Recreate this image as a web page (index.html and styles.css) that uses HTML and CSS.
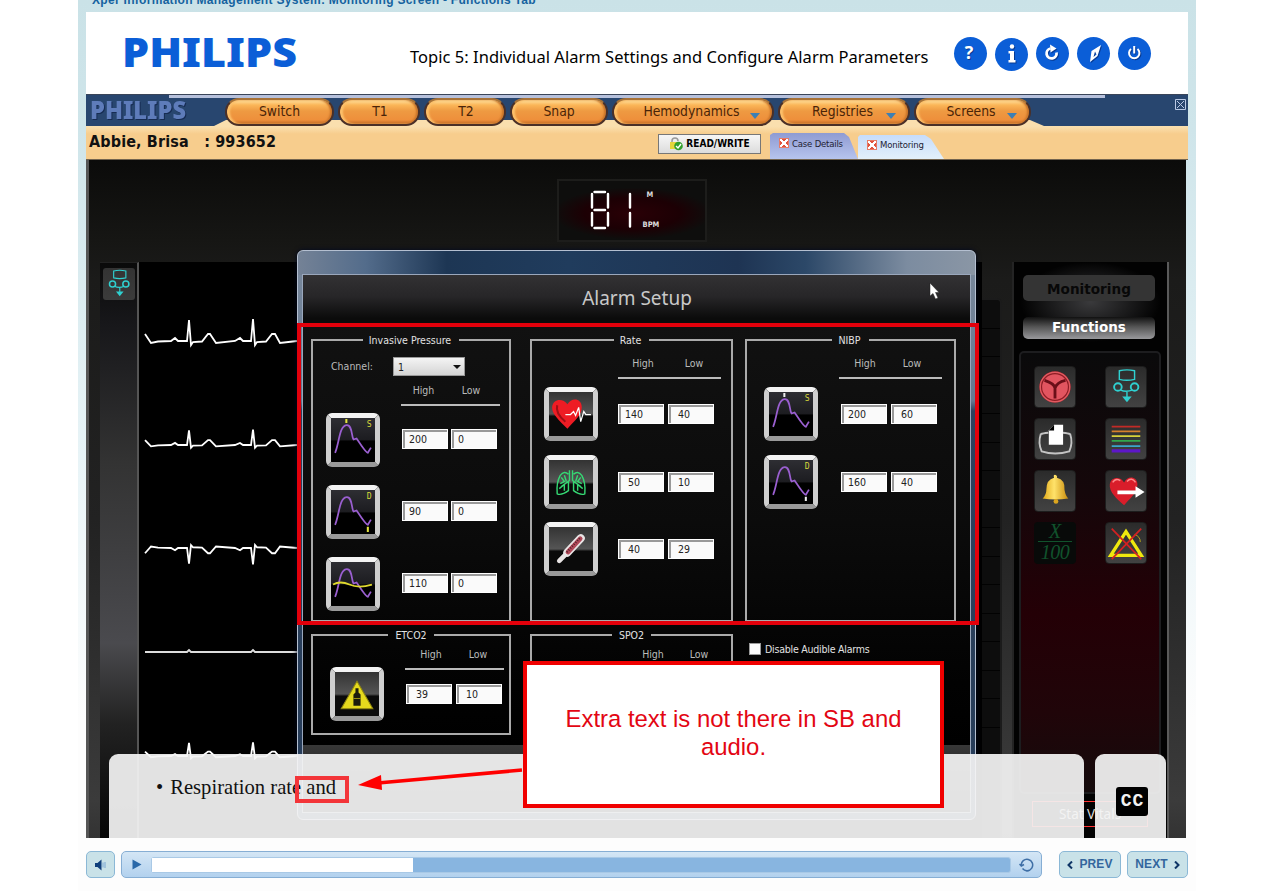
FILE: index.html
```html
<!DOCTYPE html>
<html lang="en">
<head>
<meta charset="utf-8">
<title>Xper Information Management System</title>
<link rel="stylesheet" href="styles.css">
</head>
<body>
<svg class="defs" aria-hidden="true">
  <defs>
    <linearGradient id="gloss" x1="0" y1="0" x2="0" y2="1"><stop offset="0" stop-color="#2e2e33"/><stop offset=".5" stop-color="#1c1c20"/><stop offset=".52" stop-color="#000"/></linearGradient>
    <linearGradient id="gray" x1="0" y1="0" x2="0" y2="1"><stop offset="0" stop-color="#333"/><stop offset=".5" stop-color="#555"/><stop offset=".55" stop-color="#0a0a0a"/></linearGradient>
    <linearGradient id="gold" x1="0" x2="1"><stop offset="0" stop-color="#e0a818"/><stop offset=".45" stop-color="#ffe26a"/><stop offset="1" stop-color="#c98c0c"/></linearGradient>
    <path id="pulse" d="M4 34C8 25 8 8 15 7C21 6 20 19 22 21L25 20C29 26 34 34 36 34L39 29" fill="none" stroke="#9a5fd0" stroke-width="1.7"/>
    <path id="ecg" d="M6-7L12 2L19 .5L32 0L36-3L39 0L48 0L50-21L52 4L54 1L63 .5L69-7L71-7L77 2L96 0L101-3L104 0L112 0L114-22L116 4L118 1L127 .5L133-7L136-7L141 2L158 0" fill="none" stroke="#fff" stroke-width="1.8" vector-effect="non-scaling-stroke"/>
    <g id="network" fill="none" stroke="#2fd0d0" stroke-width="2"><path d="M14 4Q22 2 30 4V13Q22 15 14 13Z" stroke-width="1.5"/><circle cx="12.500" cy="21" r="4"/><circle cx="30" cy="21" r="4"/><path d="M15 24Q21 27 28 24M22 26V32" stroke-width="1.5"/><path d="M17 31H27L22 37Z" fill="#2fd0d0" stroke="none"/></g>
  </defs>
</svg>
<div class="page">
  <div class="course">Xper Information Management System: Monitoring Screen - Functions Tab</div>
  <header class="topic">
    <svg class="brand" width="176" height="48"><text x="0" y="32" textLength="175" lengthAdjust="spacingAndGlyphs">PHILIPS</text></svg>
    <h1>Topic 5: Individual Alarm Settings and Configure Alarm Parameters</h1>
    <div class="tools">
      <span class="tool">?</span>
      <span class="tool info"><svg viewBox="0 0 33 33"><circle cx="17" cy="8.500" r="2.200"/><path d="M13.500 13H19V22H20.500V24.500H13.500V22H15V15.500H13.500Z"/></svg></span>
      <span class="tool"><svg viewBox="0 0 33 33"><path d="M20.500 15.500A5 5 0 1 1 14.500 11.500" fill="none" stroke="#fff" stroke-width="2.800"/><path d="M14 7.500L20.500 11.500L14.500 15.500Z"/></svg></span>
      <span class="tool"><svg viewBox="0 0 33 33"><path d="M24 8L20.500 19L13 25L14.500 14ZM18 14.500L16.500 20L19.500 17.500Z" fill-rule="evenodd"/></svg></span>
      <span class="tool"><svg viewBox="0 0 33 33"><path d="M13 12A5.200 5.200 0 1 0 19.500 12M16.200 9V16.500" fill="none" stroke="#fff" stroke-width="2"/></svg></span>
    </div>
  </header>

  <nav class="nav">
    <svg class="brand small" width="98" height="26"><text x="1" y="19" textLength="96" lengthAdjust="spacingAndGlyphs">PHILIPS</text></svg>
    <div class="pills">
      <span class="pill w108">Switch</span><span class="pill w81">T1</span><span class="pill w81">T2</span><span class="pill w97">Snap</span><span class="pill w161 more">Hemodynamics</span><span class="pill w131 more">Registries</span><span class="pill w116 more">Screens</span>
    </div>
    <svg class="close" width="11" height="11" viewBox="0 0 11 11"><path d="M.5.500H10.500V10.500H.5ZM2 2L9 9M9 2L2 9" fill="none" stroke="#b9c8e4"/></svg>
  </nav>
  <div class="patient">
    <b class="name">Abbie, Brisa&nbsp;&nbsp; : 993652</b>
    <span class="rw"><svg width="13" height="14" viewBox="0 0 13 14"><path d="M2 6V4A3 3 0 0 1 8 4" fill="none" stroke="#999" stroke-width="1.500"/><rect x="0" y="5" width="8" height="7" fill="#e4d53c"/><circle cx="8.500" cy="9" r="4.300" fill="#32a02c"/><path d="M6 9L8 11L11 7" fill="none" stroke="#fff" stroke-width="1.400"/></svg>READ/WRITE</span>
    <span class="tab case"><i class="x"></i>Case Details</span>
    <span class="tab mon"><i class="x"></i>Monitoring</span>
  </div>

  <main class="monitor">
    <div class="upper">
      <div class="led">
        <svg width="60" height="46" viewBox="0 0 60 46" role="img" aria-label="81"><g stroke="#fff" stroke-width="2.400" stroke-linecap="round"><path d="M5.500 4H16M5.500 22H16M5.500 40H16M3 6V19.500M19 6V19.500M3 25V37.500M19 25V37.500M41 6V19.500M41 25V38.500" fill="none"/></g></svg>
        <div class="units"><span>M</span><span>BPM</span></div>
      </div>
    </div>
    <div class="lower">
      <div class="strip"><svg class="sbtn" viewBox="0 0 42 42"><use href="#network"/></svg></div>
      <svg class="waves" width="843" height="576">
        <use href="#ecg" y="79"/>
        <use href="#ecg" transform="translate(0 183) scale(1 .7)"/>
        <use href="#ecg" transform="translate(0 286) scale(1 -.75)"/>
        <path d="M6 390H48L50 388L52 390H112L114 388L116 390H158" fill="none" stroke="#ddd" stroke-width="1.800"/>
        <use href="#ecg" transform="translate(0 494) scale(1 .62)"/>
      </svg>
      <div class="tiles"><i></i><i></i><i></i><i></i><i></i><i></i><i></i><i></i><i></i><i></i><i></i><i></i><i></i><i></i><i></i><i></i></div>
      <aside class="side">
        <span class="sidebtn off">Monitoring</span>
        <span class="sidebtn on">Functions</span>
        <div class="funcs">
          <svg class="fbtn" viewBox="0 0 42 42"><circle cx="21" cy="21" r="15" fill="#e25560" stroke="#8e1c25" stroke-width="3"/><circle cx="21" cy="21" r="15.500" fill="none" stroke="#e05a60" stroke-width="1.500"/><path d="M10 14Q20 17 21 22Q23 16 32 14M21 21V33" fill="none" stroke="#6b0f18" stroke-width="3"/></svg>
          <svg class="fbtn" viewBox="0 0 42 42"><use href="#network"/></svg>
          <svg class="fbtn" viewBox="0 0 42 42"><path d="M14 14.500Q8 15 6 16Q3 25 7 34Q21 38.500 36 34Q40 25 37 16Q35 15 29 14.500" fill="none" stroke="#c4c4c4" stroke-width="2"/><path d="M20 6H29.500V27H14.500V12Z" fill="#fff"/><path d="M20 6V12H14.500Z" fill="#000"/></svg>
          <svg class="fbtn" viewBox="0 0 42 42" stroke-width="2"><path d="M6 8H36" stroke="#c22a26"/><path d="M6 13H36" stroke="#d6802c"/><path d="M6 18H36" stroke="#d8d23a"/><path d="M6 23H36" stroke="#31a84d"/><path d="M6 28.500H36" stroke="#3aa5cc"/><path d="M6 33.500H36" stroke="#5d17c8" stroke-width="3.500"/></svg>
          <svg class="fbtn" viewBox="0 0 42 42"><path d="M21 4Q24 5 23 7Q32 9 31 20Q32 26 35 29Q21 31 8 29Q12 25 12 19Q12 9 20 7Q19 4 21 4Z" fill="url(#gold)"/><circle cx="22" cy="32" r="2.500" fill="#dca51f"/></svg>
          <svg class="fbtn" viewBox="0 0 42 42"><path d="M19 36C11 29 3 22 4 14C5 6 15 5 19 12C23 4 33 6 33 14C33 23 25 29 19 36Z" fill="#d91d2a"/><path d="M7 12Q10 7 15 10M22 11Q27 6 31 12" stroke="#ff8a8a" stroke-width="1.500" fill="none"/><path d="M12 20.500H31V16L40.500 22L31 28V24.500H12Z" fill="#fff"/></svg>
          <span class="fbtn frac"><i>X</i><i>100</i></span>
          <svg class="fbtn" viewBox="0 0 42 42"><path d="M21 9L37 34H5Z" fill="none" stroke="#efe80e" stroke-width="3.500"/><path d="M30 12Q36 14 36 20" fill="none" stroke="#b9a719"/><path d="M6 6L37 38M37 6L6 38" stroke="#d32122" stroke-width="1.800"/></svg>
        </div>
        <span class="stat">Stat Vitals</span>
      </aside>
    </div>

    <section class="dialog">
      <h2>Alarm Setup</h2>
      <div class="groups">
        <fieldset class="pressure">
          <legend>Invasive Pressure</legend>
          <div class="channel"><label>Channel:</label><span class="select">1</span></div>
          <div class="heads"><span>High</span><span>Low</span></div>
          <div class="row"><svg class="key" viewBox="0 0 43 43"><rect width="43" height="43" fill="url(#gloss)"/><use href="#pulse"/><path d="M15 1V5" stroke="#e3e33c" stroke-width="2"/><text x="35" y="9">S</text></svg><span class="in">200</span><span class="in">0</span></div>
          <div class="row"><svg class="key" viewBox="0 0 43 43"><rect width="43" height="43" fill="url(#gloss)"/><use href="#pulse"/><path d="M36 36V41" stroke="#e3e33c" stroke-width="2"/><text x="35" y="9">D</text></svg><span class="in">90</span><span class="in">0</span></div>
          <div class="row"><svg class="key" viewBox="0 0 43 43"><rect width="43" height="43" fill="url(#gloss)"/><use href="#pulse"/><path d="M2 22Q9 18 18 22T40 22" fill="none" stroke="#dfd92e" stroke-width="1.800"/></svg><span class="in">110</span><span class="in">0</span></div>
        </fieldset>
        <fieldset class="rate">
          <legend>Rate</legend>
          <div class="heads"><span>High</span><span>Low</span></div>
          <div class="row"><svg class="key" viewBox="0 0 43 43"><rect width="43" height="43" fill="url(#gray)"/><path d="M18 36C10 28 3 22 3 15C4 6 14 6 18 12C22 5 32 6 32 15C32 23 25 28 18 36Z" fill="#ee1c24"/><path d="M8 13Q6 21 16 29" stroke="#9d0f16" stroke-width="2" fill="none"/><path d="M16 22H21L24 19L26 23L29 15L31 29L34 19L36 22H41" fill="none" stroke="#fff" stroke-width="1.200"/></svg><span class="in">140</span><span class="in">40</span></div>
          <div class="row"><svg class="key" viewBox="0 0 43 43"><rect width="43" height="43" fill="url(#gray)"/><g fill="none" stroke="#35d873" stroke-width="1.400"><path d="M20 10V20L12 26M19 14Q15 10 11 15Q7 22 8 33Q12 35 19 30V20M12 17L15 21L11 23M15 15L17 21M10 28L15 24V30"/><path d="M23 10V20L31 26M24 14Q28 10 32 15Q36 22 35 33Q31 35 24 30V20M31 17L28 21L32 23M28 15L26 21M33 28L28 24V30"/></g></svg><span class="in">50</span><span class="in">10</span></div>
          <div class="row"><svg class="key" viewBox="0 0 43 43"><rect width="43" height="43" fill="url(#gray)"/><path d="M31 11L18 25" stroke="#e8e4e4" stroke-width="8" stroke-linecap="round"/><path d="M18 25L10 33" stroke="#e8e4e4" stroke-width="4.500" stroke-linecap="round"/><path d="M30.500 11.500L18.500 24.500" stroke="#b04858" stroke-width="4.500" stroke-linecap="round"/><path d="M30 11L17 25" stroke="#52202a" stroke-width="2" stroke-dasharray="1 1.500"/></svg><span class="in">40</span><span class="in">29</span></div>
        </fieldset>
        <fieldset class="nibp">
          <legend>NIBP</legend>
          <div class="heads"><span>High</span><span>Low</span></div>
          <div class="row"><svg class="key" viewBox="0 0 43 43"><rect width="43" height="43" fill="url(#gloss)"/><use href="#pulse"/><path d="M15 1V5" stroke="#eee" stroke-width="2"/><text x="35" y="9">S</text></svg><span class="in">200</span><span class="in">60</span></div>
          <div class="row"><svg class="key" viewBox="0 0 43 43"><rect width="43" height="43" fill="url(#gloss)"/><use href="#pulse"/><path d="M36 36V40" stroke="#eee" stroke-width="2"/><text x="35" y="9">D</text></svg><span class="in">160</span><span class="in">40</span></div>
        </fieldset>
        <fieldset class="etco">
          <legend>ETCO2</legend>
          <div class="heads"><span>High</span><span>Low</span></div>
          <div class="row"><svg class="key" viewBox="0 0 43 43"><rect width="43" height="43" fill="url(#gray)"/><path d="M21.500 9L37 36H6Z" fill="#e5d91d" stroke="#8e8510"/><path d="M20 16H23V20L25 22V33H18V22L20 20Z" fill="#1c1c0c"/><path d="M18 26H25" stroke="#998f14"/></svg><span class="in">39</span><span class="in">10</span></div>
        </fieldset>
        <fieldset class="spo">
          <legend>SPO2</legend>
          <div class="heads"><span>High</span><span>Low</span></div>
        </fieldset>
        <div class="mute-opt"><i></i>Disable Audible Alarms</div>
      </div>
      <div class="foot"></div>
    </section>
    <svg class="pointer" width="12" height="17" viewBox="0 0 12 17"><path d="M1 0V13L4 10.500L6.500 16L9 15L6.500 9.500H10Z" fill="#fff" stroke="#222" stroke-width=".5"/></svg>
    <div class="highlight"></div>
    <div class="caption"><span>•</span><span>Respiration rate and</span></div>
    <div class="ccbox"><span class="cc">CC</span></div>
    <div class="word"></div>
    <svg class="arrow" width="166" height="30"><path d="M164 8L20 21" stroke="#f00" stroke-width="3.600"/><path d="M0 23L23 13L24 28Z" fill="#f00"/></svg>
    <div class="callout">Extra text is not there in SB and audio.</div>
  </main>

  <footer class="player">
    <span class="btn vol"><svg width="13" height="12" viewBox="0 0 13 12"><path d="M1 4H3.500L7.500 .5V11.500L3.500 8H1Z" fill="#0f3f7c"/><path d="M9 3.500V8.500M11 3V9" stroke="#8cb4d8" stroke-width="1.300"/></svg></span>
    <div class="bar"><svg width="10" height="11" viewBox="0 0 10 11"><path d="M.5.500L9.500 5.500L.5 10.500Z" fill="#2a68a8"/></svg><div class="track"><div class="done"></div></div><svg width="16" height="14" viewBox="0 0 16 14"><path d="M3.500 10.500A5.700 5.700 0 1 0 2.300 7.500M.5 6L2.300 8L5 6.500M6.500 13H10" fill="none" stroke="#3f6fa6" stroke-width="1.500"/></svg></div>
    <span class="btn prev"><svg width="6" height="8" viewBox="0 0 6 8"><path d="M5 .5L1.500 4L5 7.500" fill="none" stroke="#0f3566" stroke-width="2"/></svg>PREV</span>
    <span class="btn next">NEXT<svg width="6" height="8" viewBox="0 0 6 8"><path d="M1 .5L4.500 4L1 7.500" fill="none" stroke="#0f3566" stroke-width="2"/></svg></span>
  </footer>
</div>
</body>
</html>
```
FILE: styles.css
```css
*{box-sizing:border-box}
body{margin:0;background:#fff;height:891px;overflow:hidden;font-family:"DejaVu Sans Condensed","DejaVu Sans",sans-serif}
.defs{position:absolute;width:0;height:0}
.page{width:1118px;height:891px;margin-left:78px;padding:0 8px;background:linear-gradient(#cae2e7 0,#cfe5ea 130px,#eaf5f8 480px,#fdfdfd 720px);display:flex;flex-direction:column}
.course{height:12px;flex:none;padding-left:6px;font:bold 12px/0 "Liberation Sans",sans-serif;color:#16639f;white-space:nowrap;letter-spacing:.3px}
.topic{height:82px;width:1102px;flex:none;background:#fff;display:flex;align-items:flex-start;padding-left:36px}
.brand{flex:none;overflow:visible;margin-top:23px;font:900 41px "Noto Sans","Open Sans",sans-serif;fill:#0b5ed7}
.topic h1{margin:34px 0 0 112px;font:400 16.5px/22px "Noto Sans",sans-serif;letter-spacing:.03px;color:#000;white-space:nowrap;width:518px}
.tools{display:flex;gap:8px;margin:25px 0 0 26px}
.tool{width:33px;height:33px;border-radius:50%;background:#0b5ed7;color:#fff;font:bold 18px/31px "Open Sans",sans-serif;text-align:center;padding-right:3px;text-shadow:1px 1px 0 #083a92}
.tool svg{width:33px;height:33px;display:block;fill:#fff;filter:drop-shadow(1px 1px 0 #083a92)}
.info{margin-top:1px}
.nav{height:32px;flex:none;background:linear-gradient(90deg,transparent 83px,#b7c1dc 83px,#b7c1dc 1019px,transparent 1019px) 0 0/100% 3px no-repeat,#28466f;border-top:1px solid #3a4559;display:flex;position:relative}
.nav::after{content:"";position:absolute;left:128px;right:144px;bottom:0;height:6px;background:#fadfae;clip-path:polygon(0 100%,12px 0,calc(100% - 14px) 0,100% 100%)}
.brand.small{margin:5px 0 0 3px;font-size:25px;fill:#5e7cba;width:98px;filter:drop-shadow(1px 1px 0 #162c53)}
.pills{display:flex;gap:5px;margin:3px 0 0 38px;position:relative;z-index:1}
.pill{height:28px;border-radius:14px;background:linear-gradient(#ffe1a0 0,#fbb658 5px,#ee9a42 11px,#ee8f3b 20px,#b5611f 25px,#5e3318 27px);border:2px solid #4a3028;border-top-color:#a87236;box-shadow:inset 3px 0 2px #fcc06a,inset -2px 0 2px #c97429;color:#4a2408;font-size:13.800px;line-height:22px;text-align:center;position:relative;flex:none}
.w108{width:109px;margin-right:-1px}.w81{width:82px;margin-right:-1px;padding-left:2px}.w97{width:98px;margin-right:-1px}.w161{width:162px;margin-right:-1px}.w131{width:132px;margin-right:-1px}.w116{width:117px;margin-right:-1px}
.more{padding-right:3px}
.more::after{content:"";position:absolute;right:12px;top:13px;border:5px solid transparent;border-top:6px solid #3d7fb4;border-bottom:0}
.close{margin:4px 0 0 145px}
.patient{height:34px;flex:none;background:linear-gradient(#fae0b0,#f7cd8d 8px,#f7cd8d);border-bottom:1px solid #73644f;display:flex;align-items:flex-start}
.name{font-size:16px;line-height:20px;width:572px;padding:6px 0 0 3px;color:#111;white-space:nowrap;letter-spacing:.13px}
.rw{width:103px;height:20px;margin-top:8px;border:1px solid #777;background:linear-gradient(#f6f6f6,#dcdcdc);font:bold 10px/18px "DejaVu Sans Condensed",sans-serif;display:flex;align-items:center;justify-content:center;gap:3px;padding-left:1px}
.tab{font-size:9.5px;letter-spacing:-.2px;display:flex;align-items:center;gap:3px;color:#223;white-space:nowrap}
.case{width:88px;height:26px;margin:7px 0 0 9px;padding:0 0 6px 9px;background:linear-gradient(#8f9bd2,#b6c4ee);clip-path:polygon(0 2px,3px 0,74px 0,79px 4px,100% 100%,0 100%)}
.mon{width:86px;height:24px;margin-top:9px;padding:0 0 5px 9px;background:linear-gradient(#c6dcfb,#e3f0fa);clip-path:polygon(0 2px,2px 0,67px 0,73px 4px,100% 100%,0 100%)}
.x{width:10px;height:10px;background:linear-gradient(45deg,transparent 42%,#fff 42% 58%,transparent 58%),linear-gradient(-45deg,transparent 42%,#fff 42% 58%,transparent 58%),#e0523d;flex:none;border:1px solid #e77b66}

.monitor{height:678px;width:1100px;flex:none;position:relative;background:linear-gradient(#0b0b0a,#161614 80px,#1b1b1a 120px,#222 360px,#3b3b3b 640px,#333);border-left:3px solid #555;overflow:hidden}
.upper{height:102px;display:flex;justify-content:center;padding:19px 12px 0 0}
.led{width:150px;height:63px;border:2px solid #1d1d1b;background:radial-gradient(ellipse 80px 26px at 50% 55%,#2a0006,#1c0004 60%,transparent),#0e0e0d;display:flex;padding:7px 0 0 30px;gap:0}
.units{display:flex;flex-direction:column;justify-content:space-between;height:43px;font:bold 7.5px/12px "DejaVu Sans Condensed",sans-serif;color:#ddd;padding-top:1px;margin-left:-6px}
.units span:first-child{padding-left:4px}
.lower{height:576px;display:flex;padding-left:11px}
.strip{width:39px;background:linear-gradient(#0a0a0a,#17171a 60px,#333 200px,#4a4a4e 380px,#222 460px,#050505);border-right:2px solid #555;border-top:1px solid #222;padding:5px 0 0 3px}
.sbtn{width:32px;height:32px;display:block;border-radius:3px;background:linear-gradient(#333,#3b3b3b)}
.waves{background:#000;flex:none;width:843px}
.tiles{width:20px;height:576px;flex:none;margin-left:0;background:#0d0d0d;border:2px solid #1b1b1b;border-left:0;border-bottom:0;margin-top:36px;border-radius:0 5px 0 0;display:flex;flex-direction:column}
.tiles i{height:28.500px;margin-top:0;border-bottom:1px solid #020202;flex:none}
.side{width:157px;flex:none;margin-left:10px;background:radial-gradient(ellipse 70px 40px at 50% 40px,#3a3a3c,transparent),#020202;border-left:2px solid #242424;border-right:2px solid #5a5a5a;padding:13px 0 0 9px;display:flex;flex-direction:column}
.sidebtn{width:132px;border-radius:5px;font:bold 14px "DejaVu Sans",sans-serif;text-align:center;flex:none}
.off{height:26px;line-height:28px;background:#343434;color:#080808;font-size:13.600px}
.on{height:22px;line-height:21px;background:linear-gradient(#111,#555 45%,#99999c);color:#fff;margin-top:16px;font-size:13.500px}
.funcs{width:142px;height:443px;margin:12px 0 0 -4px;border:2px solid #1d1d1f;border-radius:5px;padding:13px 0 0 13px;display:grid;grid-template-columns:42px 42px;grid-auto-rows:42px;gap:10px 29px;background:linear-gradient(#0a0a0b,#15070a 140px,#240006 260px,#200509 360px,#150b0c);align-content:start}
.fbtn{width:42px;height:42px;border-radius:4px;background:linear-gradient(#2b2b2b,#424242);border:1px solid #1d1d1d;display:block}
.frac{background:#080a09;color:#11522c;font:italic 20px/18px "Liberation Serif",serif;display:flex;flex-direction:column;align-items:center;border:0}
.frac i:first-child{border-bottom:1px solid #11522c;width:34px;text-align:center;height:20px}
.frac i:last-child{line-height:20px;letter-spacing:-.5px}
.stat{width:116px;height:26px;border:1px solid #f33;margin:7px 0 0 9px;color:#ddd;font:13.500px/24px "Noto Sans",sans-serif;text-align:center}

.dialog{position:absolute;left:208px;top:90px;width:679px;height:570px;border:1px solid #b4bfd0;border-radius:6px;background:linear-gradient(90deg,#748296,#536c8b 10%,#1d3654 22%,#203c5d 40%,#1e3453 65%,#2c4868 75%,#7c8ca0 90%,#8a96a5) 0 0/100% 24px no-repeat,linear-gradient(#7a899d,#657991 150px,#2d425f 160px,#263c59);box-shadow:0 0 5px #000820;padding:23px 4px 0;display:flex;flex-direction:column}
.dialog h2{margin:0;height:49px;flex:none;border:1px solid #9aa7bc;border-bottom:0;background:linear-gradient(#323133,#272628 45%,#0b0b0b 90%);font:400 19px/46px "Noto Sans",sans-serif;color:#c9c9c9;text-align:center;padding-left:1px}
.groups{flex:none;height:422px;border:solid #9aa7bc;border-width:0 1px;background:linear-gradient(#111,#0b0b0b 200px,#020202 360px,#000);padding:11px 14px 0 8px;display:grid;grid-template-columns:200px 203px 211px;grid-template-rows:288px 106px;column-gap:18px;row-gap:7px;align-content:start}
fieldset{margin:0;padding:0;min-width:0;border:2px solid #aaa;color:#bbb;font-size:10.500px;overflow:visible}
.rate{margin-left:1px;margin-right:-1px}
.nibp{margin-left:-5px;margin-right:5px}
.spo{margin-left:1px;margin-right:-1px}
legend{margin:0 auto;padding:0 7px;height:12px;line-height:12px;color:#e2e2e2;font-size:10.500px}
.pressure legend,.rate legend,.nibp legend{position:relative;left:-1px}
.channel{display:flex;height:20px;margin:10px 0 0 18px;align-items:center}
.channel label{width:62px}
.select{width:72px;height:19px;background:linear-gradient(#f4f4f4,#d4d4d4);color:#222;line-height:18px;padding-left:4px;position:relative;border:1px solid #999}
.select::after{content:"";position:absolute;right:3px;top:7px;border:4px solid transparent;border-top-color:#111;border-bottom:0}
.heads{display:flex;border-bottom:2px solid #bbb;line-height:14px;height:23px}
.heads span{width:47px;text-align:center;flex:none}
.row{display:flex;align-items:center;height:54px}
.key{width:54px;height:54px;flex:none;border:5px solid #aaa;border-color:#f3f3f3 #cfcfcf #999 #cfcfcf;border-radius:6px;background:#000}
.key text{font:8px "DejaVu Sans Mono",monospace;fill:#d8d83a}
.in{height:20px;width:46px;background:#fafafa;color:#222;border:1px solid #fff;box-shadow:inset 1px 1px 0 1px #999;line-height:18px;padding-left:6px;flex:none;font-size:10.500px}
.in+.in{margin-left:3px}
.pressure .heads{width:99px;margin:7px 0 7px 88px}
.pressure .heads span{width:45px}
.pressure .heads span+span{width:50px}
.pressure .row{margin:0 0 18px 13px}
.pressure .in{position:relative;top:-1px}
.pressure .in:nth-child(2){margin-left:22px}
.rate .heads,.nibp .heads{width:103px;margin:10px 0 8px 86px}
.rate .row,.nibp .row{margin:0 0 13.500px 12px}
.rate .in:nth-child(2){margin-left:20px}
.rate .in+.in,.nibp .in+.in,.etco .in+.in{margin-left:4px}
.rate .in+.in,.nibp .in+.in,.etco .in,.rate .row:nth-child(n+4) .in{padding-left:9px}
.nibp .heads{margin-left:92px}
.nibp .row{margin-left:17px}
.nibp .in:nth-child(2){margin-left:23px}
.rate .heads span{width:50px}
.rate .heads span+span{width:52px}
.nibp .heads span{width:52px}
.nibp .heads span+span{width:42px}
.etco .heads{width:99px;margin:6px 0 0 92px;height:23px}
.etco .row{margin:-3px 0 0 17px}
.etco .in:nth-child(2){margin-left:22px}
.etco .heads span:first-child{width:52px}.etco .heads span+span{width:42px}
.spo .heads{margin:6px 0 0 97px;width:90px}
.spo .heads span:first-child{width:48px}.spo .heads span+span{width:44px}
.mute-opt{display:flex;gap:4px;align-items:center;height:16px;margin:12px 0 0 -1px;font-size:10.500px;color:#e2e2e2;white-space:nowrap;letter-spacing:-.22px}
.mute-opt i{width:12px;height:12px;background:#fafafa;border:1px solid #999}
.foot{height:68px;background:linear-gradient(#383838,#0b0b0b);border:1px solid #9aa7bc;border-top:0}

.pointer{position:absolute;left:840px;top:123px}
.highlight{position:absolute;left:208px;top:163px;width:682px;height:302px;border:4px solid #e3000b}
.caption{position:absolute;left:20px;top:594px;width:975px;height:84px;border-radius:9px 9px 0 0;background:rgba(244,244,244,.925);font:20.600px/24px "Liberation Serif",serif;color:#111;padding:21px 0 0 47px;display:flex;gap:7px}
.ccbox{position:absolute;left:1006px;top:594px;width:71px;height:84px;border-radius:9px 9px 0 0;background:rgba(244,244,244,.925);padding:33px 0 0 21px}
.cc{display:block;width:32px;height:29px;border-radius:3px;background:#000;color:#f1f1f1;font:bold 18px/28px "Liberation Mono",monospace;text-align:center;letter-spacing:1px;padding-left:1px}
.word{position:absolute;left:206px;top:616px;width:54px;height:27px;border:4px solid #f33539}
.arrow{position:absolute;left:269px;top:602px}
.callout{position:absolute;left:434px;top:501px;width:421px;height:147px;border:4px solid #f00000;background:#fff;color:#e30613;font:23.900px/28px "Liberation Sans",sans-serif;text-align:center;padding:40px 36px 0}

.player{flex:none;height:53px;padding-top:13px;display:flex;width:1104px}
.btn{height:27px;border:1px solid #8bb8d6;border-radius:5px;background:#c9e2e8;color:#33669d;font:bold 12px/25px "Liberation Sans",sans-serif;display:flex;align-items:center;justify-content:center;gap:6px;letter-spacing:.1px}
.vol{width:29px}
.bar{width:921px;height:27px;margin:0 17px 0 6px;border:1px solid #86aed4;border-radius:5px;background:linear-gradient(#d4e6f5,#b2d1ee);display:flex;align-items:center;padding:0 6px 0 10px;justify-content:space-between}
.track{width:860px;height:16px;background:#88b5e0;border:1px solid #a9c9e6;border-radius:3px;margin-left:0}
.done{width:261px;height:14px;background:#fff}
.prev{width:62px;margin-right:6px}
.next{width:61px}
```
